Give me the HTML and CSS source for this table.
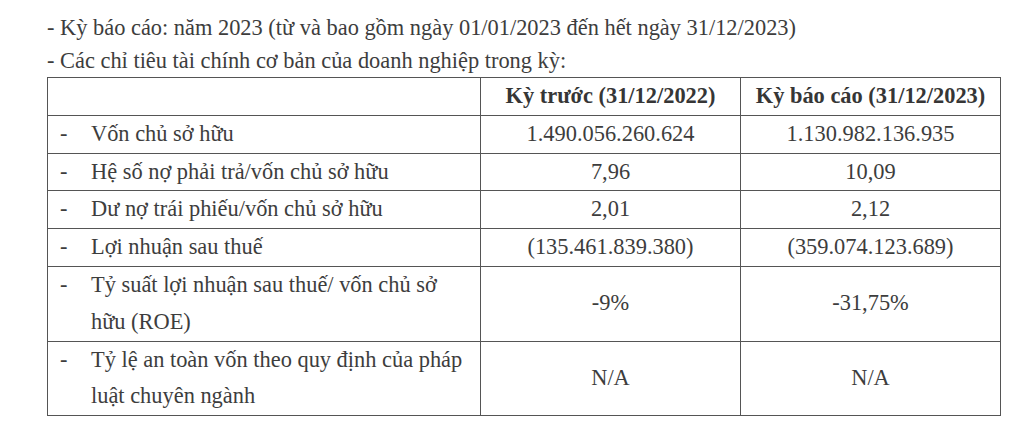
FILE: index.html
```html
<!DOCTYPE html>
<html lang="vi">
<head>
<meta charset="utf-8">
<title>Các chỉ tiêu tài chính</title>
<link rel="stylesheet" href="styles.css">
</head>
<body>
<div class="page">
  <p class="intro">- Kỳ báo cáo: năm 2023 (từ và bao gồm ngày 01/01/2023 đến hết ngày 31/12/2023)</p>
  <p class="intro">- Các chỉ tiêu tài chính cơ bản của doanh nghiệp trong kỳ:</p>
  <table class="fin">
    <colgroup>
      <col class="c-label">
      <col class="c-val">
      <col class="c-val">
    </colgroup>
    <thead>
      <tr>
        <th></th>
        <th>Kỳ trước (31/12/2022)</th>
        <th>Kỳ báo cáo (31/12/2023)</th>
      </tr>
    </thead>
    <tbody>
      <tr>
        <td class="label"><span class="dash">-</span><span class="txt">Vốn chủ sở hữu</span></td>
        <td>1.490.056.260.624</td>
        <td>1.130.982.136.935</td>
      </tr>
      <tr>
        <td class="label"><span class="dash">-</span><span class="txt">Hệ số nợ phải trả/vốn chủ sở hữu</span></td>
        <td>7,96</td>
        <td>10,09</td>
      </tr>
      <tr>
        <td class="label"><span class="dash">-</span><span class="txt">Dư nợ trái phiếu/vốn chủ sở hữu</span></td>
        <td>2,01</td>
        <td>2,12</td>
      </tr>
      <tr>
        <td class="label"><span class="dash">-</span><span class="txt">Lợi nhuận sau thuế</span></td>
        <td>(135.461.839.380)</td>
        <td>(359.074.123.689)</td>
      </tr>
      <tr>
        <td class="label"><span class="dash">-</span><span class="txt">Tỷ suất lợi nhuận sau thuế/ vốn chủ sở<br>hữu (ROE)</span></td>
        <td>-9%</td>
        <td>-31,75%</td>
      </tr>
      <tr>
        <td class="label"><span class="dash">-</span><span class="txt">Tỷ lệ an toàn vốn theo quy định của pháp<br>luật chuyên ngành</span></td>
        <td>N/A</td>
        <td>N/A</td>
      </tr>
    </tbody>
  </table>
</div>
</body>
</html>
```

FILE: styles.css
```css
html, body {
  margin: 0;
  padding: 0;
  background: #ffffff;
}

.page {
  padding: 11px 0 0 47px;
  font-family: "Liberation Serif", "Times New Roman", serif;
  font-size: 22.4px;
  color: #3d3d3d;
}

.intro {
  margin: 0;
  line-height: 33px;
}

.fin {
  border-collapse: collapse;
  table-layout: fixed;
  width: 954px;
  font-size: 22.4px;
  color: #3d3d3d;
}

.c-label { width: 433px; }
.c-val { width: 260px; }

.fin th,
.fin td {
  border: 1px solid #555555;
  padding: 0;
  line-height: 36.8px;
  text-align: center;
  vertical-align: middle;
}

.fin th {
  font-weight: bold;
  color: #363636;
}

.fin td.label {
  text-align: left;
  padding-left: 12px;
}

.label {
  white-space: nowrap;
}

.label .dash,
.label .txt {
  display: inline-block;
  vertical-align: top;
}

.label .dash {
  width: 31px;
}
```
